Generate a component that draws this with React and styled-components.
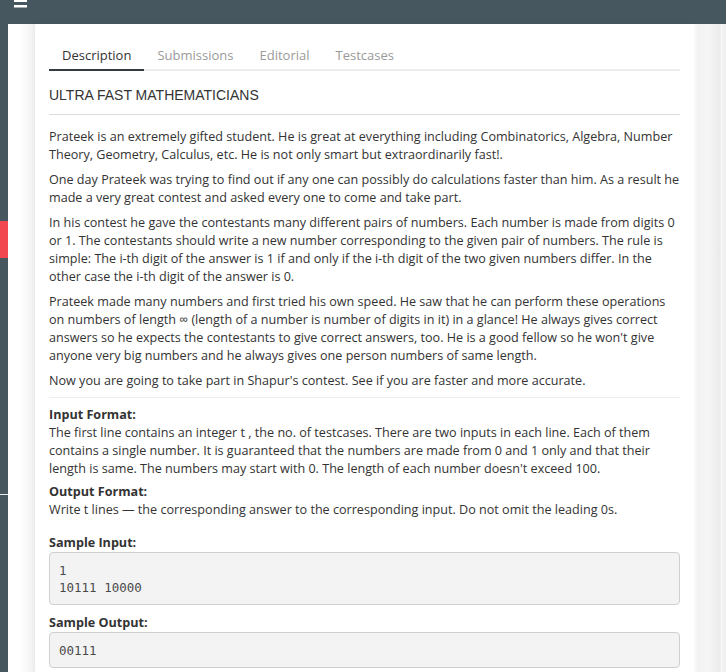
import React from 'react'
import styled, { createGlobalStyle } from 'styled-components'

const GlobalStyle = createGlobalStyle`
  html, body { margin: 0; padding: 0; background: #fff; }
  body { font-family: "Open Sans", "Liberation Sans", sans-serif; color: #333; overflow: hidden; }
  * { box-sizing: border-box; }
`

const Page = styled.div`
  width: 726px;
  height: 672px;
  display: flex;
  flex-direction: column;
  overflow: hidden;
`

const TopBar = styled.div`
  height: 24px;
  flex: none;
  background: #46575f;
  padding-left: 14px;
  display: flex;
  align-items: flex-start;
`

const Body = styled.div`
  flex: 1;
  display: flex;
  min-height: 0;
`

const SideRail = styled.div`
  width: 8px;
  flex: none;
  background: #46575f;
  display: flex;
  flex-direction: column;
`

const RailMark = styled.div`
  height: 37px;
  margin-top: 197px;
  background: #f2474f;
`

const RailDivider = styled.div`
  height: 1px;
  margin-top: 236px;
  background: #e8ecee;
`

const Main = styled.div`
  flex: 1;
  display: flex;
  padding-left: 27px;
  background: linear-gradient(to right, #fff 0, #fff 12px, #f1f1f1 27px);
`

const Card = styled.div`
  width: 658px;
  flex: none;
  background: #fff;
  padding: 14px 13px 0 14px;
  box-shadow: 0 0 6px rgba(0, 0, 0, 0.06);
`

const Gutter = styled.div`
  width: 29px;
  flex: none;
  background: linear-gradient(to right, #fff 0, #f2f2f2 5px, #f6f6f6 50%, #eaeaea 27px, #fff 29px);
`

const Tabs = styled.div`
  display: flex;
  border-bottom: 2px solid #ececec;
`

const Tab = styled.div`
  font-size: 13px;
  line-height: 18px;
  padding: 8px 13px 5px 13px;
  margin-bottom: -2px;
  color: ${p => (p.$active ? '#333' : '#9a9a9a')};
  border-bottom: 2px solid ${p => (p.$active ? '#333a40' : 'transparent')};
  min-width: ${p => (p.$active ? '94px' : 'auto')};
  text-align: center;
`

const Title = styled.h1`
  margin: 14px 0 0;
  padding-bottom: 9px;
  font-family: "Liberation Sans", Arial, sans-serif;
  font-weight: normal;
  font-size: 14px;
  line-height: 20px;
  color: #333;
  border-bottom: 1px solid #dcdcdc;
`

const Statement = styled.div`
  padding-top: 13px;
  font-size: 12.6px;
  line-height: 18px;
  color: #333;
`

const Para = styled.p`
  margin: 0 0 7px;
`

const Rule = styled.hr`
  border: 0;
  border-top: 1px solid #eee;
  margin: 6px 0 8px;
`

const Heading = styled.div`
  font-weight: bold;
  line-height: 18px;
`

const Section = styled.div`
  margin-bottom: ${p => p.$gap || '5px'};
`

const SampleLabel = styled.div`
  font-weight: bold;
  line-height: 18px;
`

const Pre = styled.pre`
  margin: 0 0 9px;
  padding: 9px 9px 8px;
  background: #f3f3f3;
  border: 1px solid #cfcfcf;
  border-radius: 4px;
  font-family: "DejaVu Sans Mono", "Liberation Mono", monospace;
  font-size: 12.5px;
  line-height: 17px;
  color: #4a4a4a;
  white-space: pre;
`

const Burger = () => (
  <svg width="13" height="8" viewBox="0 0 13 8">
    <rect x="0" y="0" width="13" height="2" fill="#fff" />
    <rect x="0" y="5" width="13" height="2.5" fill="#fff" />
  </svg>
)

export default function App() {
  return (
    <Page>
      <GlobalStyle />
      <TopBar><Burger /></TopBar>
      <Body>
        <SideRail>
          <RailMark />
          <RailDivider />
        </SideRail>
        <Main>
          <Card>
            <Tabs>
              <Tab $active>Description</Tab>
              <Tab>Submissions</Tab>
              <Tab>Editorial</Tab>
              <Tab>Testcases</Tab>
            </Tabs>
            <Title>ULTRA FAST MATHEMATICIANS</Title>
            <Statement>
              <Para>Prateek is an extremely gifted student. He is great at everything including Combinatorics, Algebra, Number Theory, Geometry, Calculus, etc. He is not only smart but extraordinarily fast!.</Para>
              <Para>One day Prateek was trying to find out if any one can possibly do calculations faster than him. As a result he made a very great contest and asked every one to come and take part.</Para>
              <Para>In his contest he gave the contestants many different pairs of numbers. Each number is made from digits 0 or 1. The contestants should write a new number corresponding to the given pair of numbers. The rule is simple: The i-th digit of the answer is 1 if and only if the i-th digit of the two given numbers differ. In the other case the i-th digit of the answer is 0.</Para>
              <Para>Prateek made many numbers and first tried his own speed. He saw that he can perform these operations on numbers of length ∞ (length of a number is number of digits in it) in a glance! He always gives correct answers so he expects the contestants to give correct answers, too. He is a good fellow so he won't give anyone very big numbers and he always gives one person numbers of same length.</Para>
              <Para>Now you are going to take part in Shapur's contest. See if you are faster and more accurate.</Para>
              <Rule />
              <Section>
                <Heading>Input Format:</Heading>
                The first line contains an integer t , the no. of testcases. There are two inputs in each line. Each of them contains a single number. It is guaranteed that the numbers are made from 0 and 1 only and that their length is same. The numbers may start with 0. The length of each number doesn't exceed 100.
              </Section>
              <Section $gap="15px">
                <Heading>Output Format:</Heading>
                Write t lines — the corresponding answer to the corresponding input. Do not omit the leading 0s.
              </Section>
              <SampleLabel>Sample Input:</SampleLabel>
              <Pre>{'1\n10111 10000'}</Pre>
              <SampleLabel>Sample Output:</SampleLabel>
              <Pre>00111</Pre>
            </Statement>
          </Card>
          <Gutter />
        </Main>
      </Body>
    </Page>
  )
}
